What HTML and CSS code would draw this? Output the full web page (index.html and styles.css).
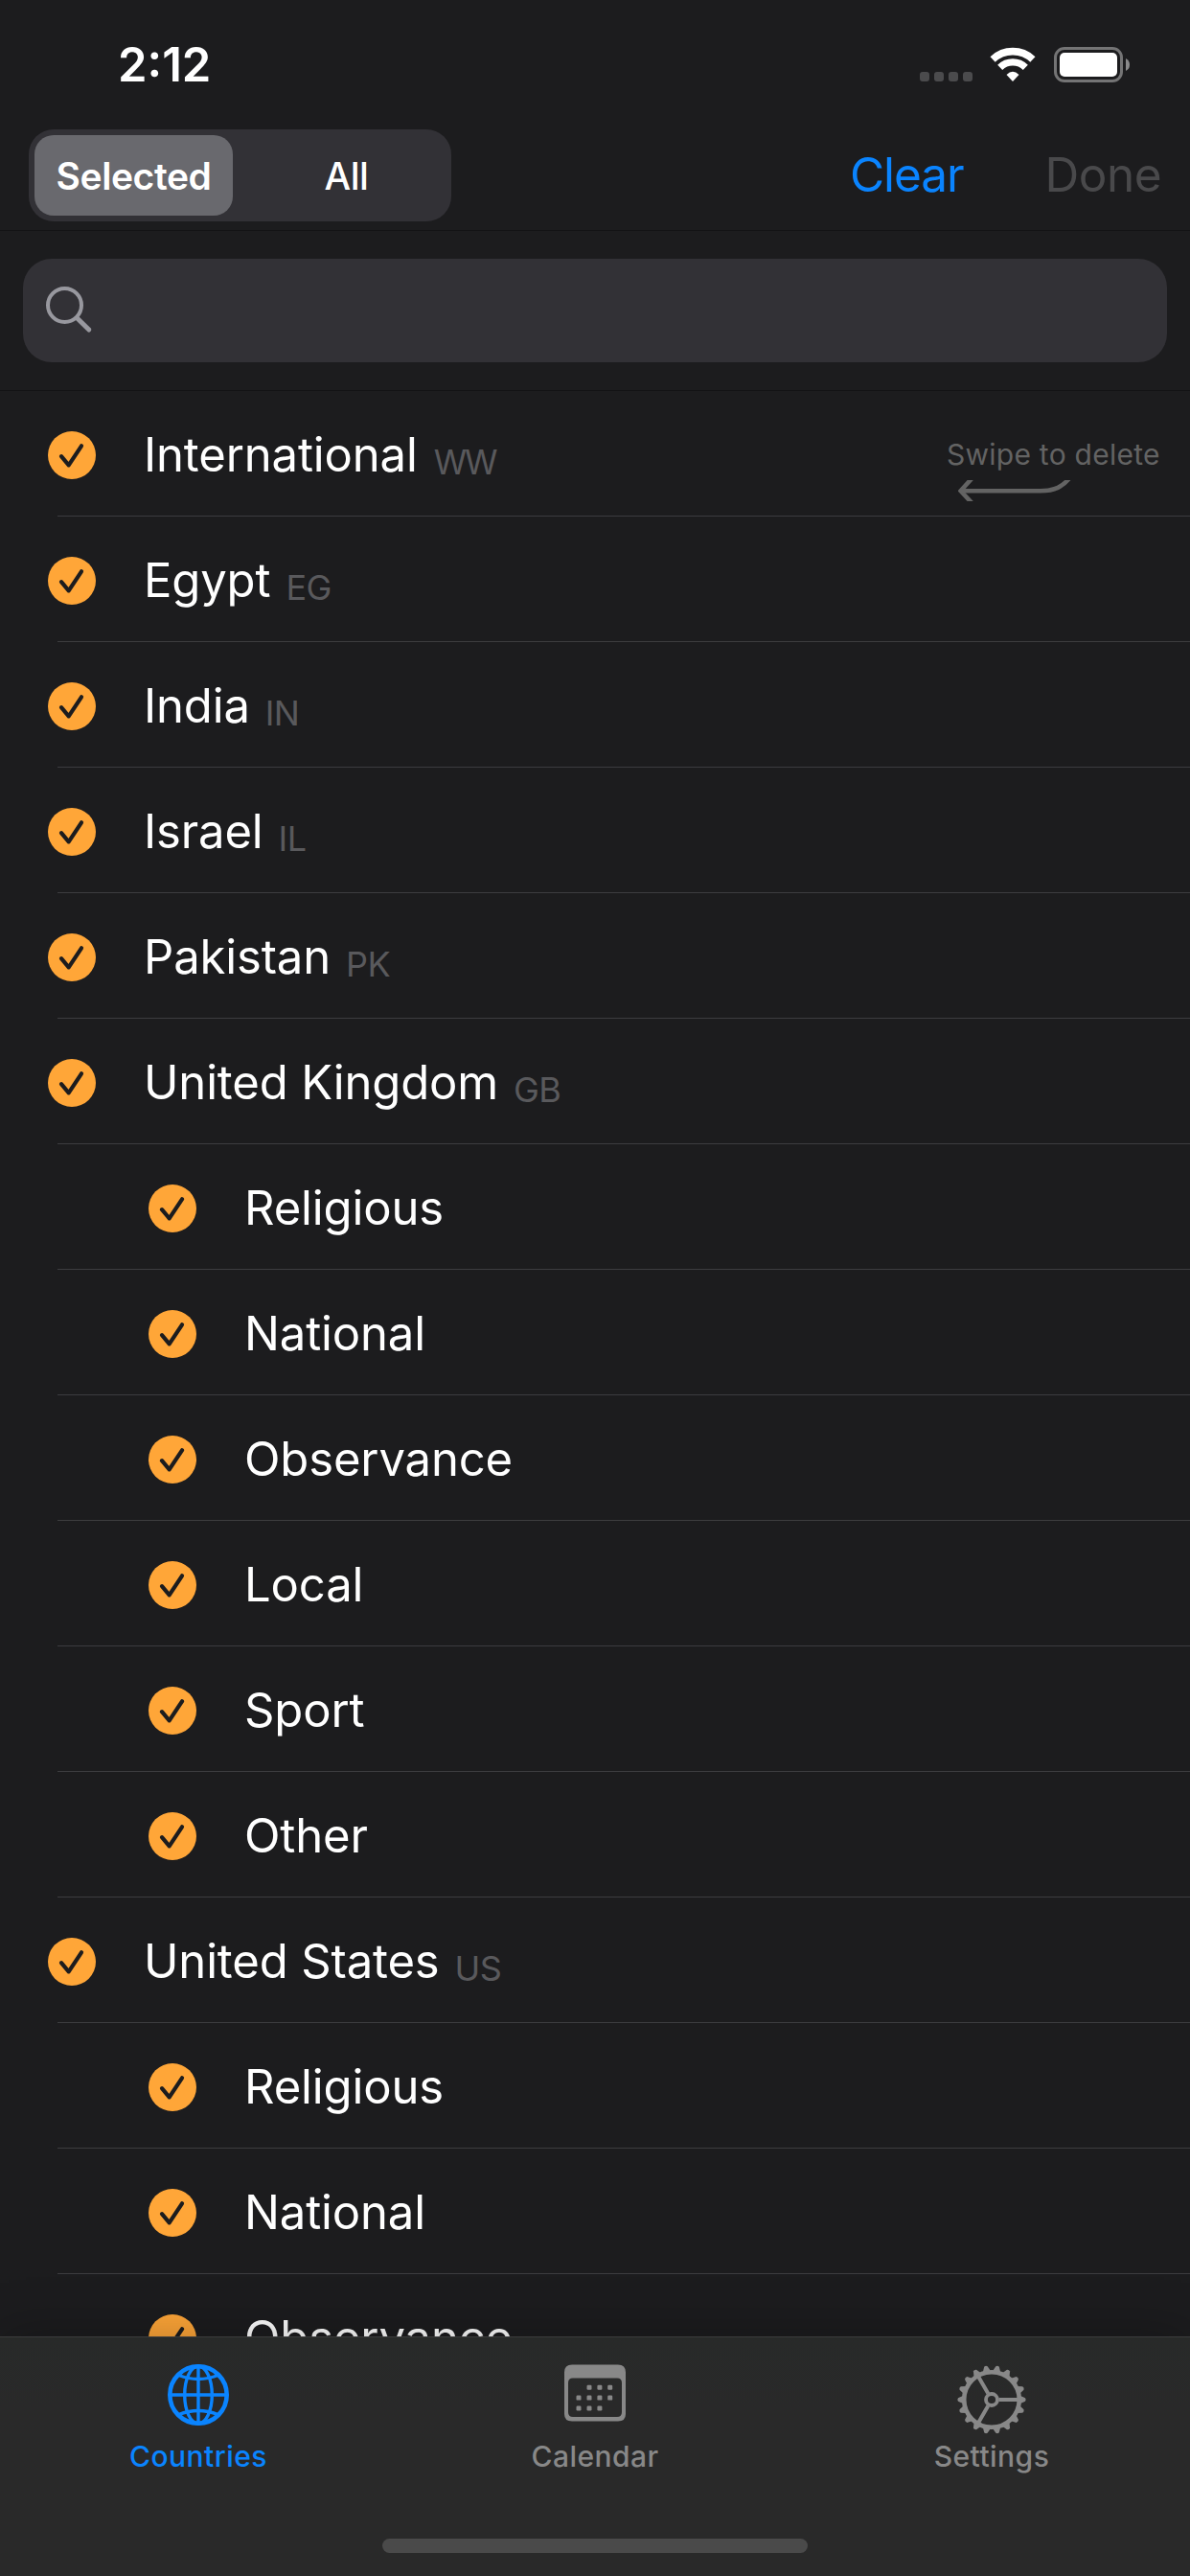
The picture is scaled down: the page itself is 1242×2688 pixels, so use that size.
FILE: index.html
```
<!DOCTYPE html>
<html lang="en">
<head>
<meta charset="utf-8">
<title>Countries</title>
<link rel="stylesheet" href="styles.css">
</head>
<body>
<svg class="defs" width="0" height="0" aria-hidden="true">
  <symbol id="check" viewBox="0 0 50 50">
    <circle cx="25" cy="25" r="25" fill="#ffa638"/>
    <path d="M14 26.2 21.7 35.3 35 15.3" fill="none" stroke="#1c1c1e" stroke-width="4.2" stroke-linecap="round" stroke-linejoin="round"/>
  </symbol>
</svg>
<div class="screen">
  <div class="status">
    <span class="time">2:12</span>
    <span class="signal"><i></i><i></i><i></i><i></i></span>
    <svg class="wifi" width="48" height="37" viewBox="0 0 48 37">
      <path d="M3.1 12.9A30.5 30.5 0 0 1 44.9 12.9" fill="none" stroke="#fff" stroke-width="7.6"/>
      <path d="M10.7 21.4A19 19 0 0 1 37.3 21.4" fill="none" stroke="#fff" stroke-width="7.2"/>
      <path d="M17.5 29Q24 22.6 30.5 29L24 36Z" fill="#fff"/>
    </svg>
    <svg class="battery" width="80" height="37" viewBox="0 0 80 37">
      <rect x="1.5" y="1.5" width="69" height="34" rx="9.5" fill="none" stroke="#747475" stroke-width="3"/>
      <rect x="6" y="6" width="60" height="25" rx="5" fill="#fff"/>
      <path d="M75 12Q79 14 79 18.5T75 25Z" fill="#8a8a8b"/>
    </svg>
  </div>
  <div class="navbar">
    <div class="segments">
      <span class="segment active">Selected</span>
      <span class="segment">All</span>
    </div>
    <span class="action clear">Clear</span>
    <span class="action done">Done</span>
  </div>
  <div class="searchbar">
    <div class="field">
      <svg width="50" height="50" viewBox="0 0 50 50" fill="none" stroke="#98989f" stroke-linecap="round">
        <circle cx="19.5" cy="19.5" r="17.5" stroke-width="4"/>
        <path d="M32.5 33 44.8 45" stroke-width="5"/>
      </svg>
    </div>
  </div>
  <div class="list">
    <div class="row"><svg class="check"><use href="#check"/></svg><span class="name">International<span class="code wide">WW</span></span>
      <div class="hint">
        <span>Swipe to delete</span>
        <svg width="120" height="22" viewBox="0 0 120 22" fill="none" stroke="#636363" stroke-width="4.6">
          <path d="M15-2.5 2.6 11.2 15 24.5"/>
          <path d="M2 11.2H86C101 11.2 109 7 117-3"/>
        </svg>
      </div>
    </div>
    <div class="row"><svg class="check"><use href="#check"/></svg><span class="name">Egypt<span class="code">EG</span></span></div>
    <div class="row"><svg class="check"><use href="#check"/></svg><span class="name">India<span class="code">IN</span></span></div>
    <div class="row"><svg class="check"><use href="#check"/></svg><span class="name">Israel<span class="code">IL</span></span></div>
    <div class="row"><svg class="check"><use href="#check"/></svg><span class="name">Pakistan<span class="code">PK</span></span></div>
    <div class="row"><svg class="check"><use href="#check"/></svg><span class="name">United Kingdom<span class="code">GB</span></span></div>
    <div class="row sub"><svg class="check"><use href="#check"/></svg><span class="name">Religious</span></div>
    <div class="row sub"><svg class="check"><use href="#check"/></svg><span class="name">National</span></div>
    <div class="row sub"><svg class="check"><use href="#check"/></svg><span class="name">Observance</span></div>
    <div class="row sub"><svg class="check"><use href="#check"/></svg><span class="name">Local</span></div>
    <div class="row sub"><svg class="check"><use href="#check"/></svg><span class="name">Sport</span></div>
    <div class="row sub"><svg class="check"><use href="#check"/></svg><span class="name">Other</span></div>
    <div class="row"><svg class="check"><use href="#check"/></svg><span class="name">United States<span class="code">US</span></span></div>
    <div class="row sub"><svg class="check"><use href="#check"/></svg><span class="name">Religious</span></div>
    <div class="row sub"><svg class="check"><use href="#check"/></svg><span class="name">National</span></div>
    <div class="row sub"><svg class="check"><use href="#check"/></svg><span class="name">Observance</span></div>
  </div>
  <div class="tabbar">
    <div class="tabs">
      <div class="tab current">
        <svg width="74" height="74" viewBox="-37 -37 74 74" fill="none" stroke="currentColor">
          <circle r="29.7" stroke-width="4.6"/>
          <ellipse rx="14.3" ry="30" stroke-width="3.4"/>
          <path d="M0-30V30M-30 0H30" stroke-width="3.4"/>
          <path d="M-20.5-20.5Q0-12.5 20.5-20.5M-20.5 20.5Q0 12.5 20.5 20.5" stroke-width="3.4"/>
        </svg>
        <span>Countries</span>
      </div>
      <div class="tab">
        <svg width="74" height="74" viewBox="-37 -37 74 74" fill="currentColor">
          <path fill-rule="evenodd" d="M-24-31.5H24Q32-31.5 32-23.5V20Q32 27.500 24 27.500H-24Q-32 27.500-32 20V-23.500Q-32-31.500-24-31.500ZM-23-17.500Q-28-17.500-28-12.500V18Q-28 23-23 23H23Q28 23 28 18V-12.500Q28-17.500 23-17.500Z"/>
          <rect x="-8.5" y="-10.2" width="5" height="5" rx="1.2"/><rect x="2.400" y="-10.200" width="5" height="5" rx="1.200"/><rect x="13.200" y="-10.200" width="5" height="5" rx="1.200"/>
          <rect x="-19.500" y=".6" width="5" height="5" rx="1.200"/><rect x="-8.500" y=".6" width="5" height="5" rx="1.200"/><rect x="2.400" y=".6" width="5" height="5" rx="1.200"/><rect x="13.200" y=".6" width="5" height="5" rx="1.200"/>
          <rect x="-19.500" y="11.500" width="5" height="5" rx="1.200"/><rect x="-8.500" y="11.500" width="5" height="5" rx="1.200"/><rect x="2.400" y="11.500" width="5" height="5" rx="1.200"/>
        </svg>
        <span>Calendar</span>
      </div>
      <div class="tab">
        <svg width="74" height="74" viewBox="-37 -42 74 74" overflow="visible" fill="none" stroke="currentColor">
          <defs><path id="tooth" d="M30-4 35-1.8Q36.400 0 35 1.800L30 4Z" fill="currentColor" stroke="none"/></defs>
          <circle r="28.800" stroke-width="4.600"/>
          <circle r="6" stroke-width="3.800"/>
          <path d="M7.500 0H27M-3.750-6.500-14-24.200M-3.750 6.500-14 24.200" stroke-width="4"/>
          <use href="#tooth"/><use href="#tooth" transform="rotate(20)"/><use href="#tooth" transform="rotate(40)"/><use href="#tooth" transform="rotate(60)"/><use href="#tooth" transform="rotate(80)"/><use href="#tooth" transform="rotate(100)"/><use href="#tooth" transform="rotate(120)"/><use href="#tooth" transform="rotate(140)"/><use href="#tooth" transform="rotate(160)"/><use href="#tooth" transform="rotate(180)"/><use href="#tooth" transform="rotate(200)"/><use href="#tooth" transform="rotate(220)"/><use href="#tooth" transform="rotate(240)"/><use href="#tooth" transform="rotate(260)"/><use href="#tooth" transform="rotate(280)"/><use href="#tooth" transform="rotate(300)"/><use href="#tooth" transform="rotate(320)"/><use href="#tooth" transform="rotate(340)"/>
        </svg>
        <span>Settings</span>
      </div>
    </div>
    <div class="home"></div>
  </div>
</div>
</body>
</html>
```
FILE: styles.css
```
* { box-sizing: border-box; }
body {
  margin: 0;
  background: #1c1c1e;
  color: #fff;
  font-family: Inter, "Liberation Sans", sans-serif;
}
.defs { display: none; }
svg { display: block; flex: none; }
.screen {
  display: flex;
  flex-direction: column;
  width: 1242px;
  height: 2688px;
  overflow: hidden;
}

/* Status bar */
.status {
  display: flex;
  align-items: flex-start;
  height: 132px;
  padding: 49px 62px 0 123px;
}
.time {
  flex: 1;
  margin-top: -6px;
  font-size: 49px;
  line-height: 49px;
  font-weight: 600;
}
.signal { display: flex; gap: 5px; margin: 26px 18px 0 0; }
.signal i { width: 10px; height: 10px; border-radius: 3px; background: #4b4b4d; }
.wifi { margin-right: 19px; }

/* Navigation bar */
.navbar {
  display: flex;
  align-items: center;
  height: 109px;
  padding: 0 30px 6px;
  border-bottom: 1px solid #131315;
}
.segments {
  display: flex;
  justify-content: space-between;
  width: 441px;
  height: 96px;
  margin-right: auto;
  padding: 6px;
  border-radius: 26px;
  background: #323136;
}
.segment {
  display: flex;
  align-items: center;
  justify-content: center;
  width: 207px;
  font-size: 39px;
  font-weight: 500;
  letter-spacing: -0.4px;
}
.segment.active {
  border-radius: 20px;
  background: #69696e;
  font-weight: 600;
}
.action { margin-top: -2px; font-size: 49.5px; line-height: 60px; }
.clear { margin-right: 85px; color: #0a84ff; letter-spacing: -1.1px; }
.done { color: #49494b; letter-spacing: -0.5px; }

/* Search */
.searchbar {
  height: 167px;
  padding: 29px 24px 0;
  border-bottom: 1px solid #131315;
}
.field {
  height: 108px;
  padding: 29px 24px;
  border-radius: 30px;
  background: #323136;
}

/* Country list */
.list { flex: 1; min-height: 0; overflow: hidden; }
.row {
  display: flex;
  align-items: center;
  height: 131px;
  padding: 3px 28px 0 50px;
  background: linear-gradient(#3c3c3f, #3c3c3f) 60px 100% / 100% 1px no-repeat;
}
.row.sub { padding-left: 155px; }
.check { width: 50px; height: 50px; margin-right: 50px; }
.name {
  margin-top: -1px;
  font-size: 49px;
  line-height: 60px;
  letter-spacing: -0.14px;
  white-space: nowrap;
}
.code {
  margin-left: 16px;
  font-size: 36px;
  line-height: 1;
  letter-spacing: -0.6px;
  vertical-align: -3px;
  color: #59595c;
}
.code.wide { margin-left: 17px; font-size: 35px; letter-spacing: -3px; }
.hint {
  width: 226px;
  margin-left: auto;
  padding-top: 29px;
  font-size: 30px;
  line-height: 36px;
  letter-spacing: 0.25px;
  color: #636363;
  white-space: nowrap;
}
.hint svg { margin: 9px 0 0 12px; overflow: hidden; }

/* Tab bar */
.tabbar {
  position: relative;
  height: 250px;
  border-top: 1px solid #3c3c3d;
  background: linear-gradient(#282a29, #292929 30%);
  box-shadow: 0 0 54px rgba(0, 0, 0, 0.28);
}
.tabs { display: grid; grid-template-columns: repeat(3, 1fr); height: 210px; }
.tab {
  display: flex;
  flex-direction: column;
  align-items: center;
  padding-top: 23px;
  font-size: 30px;
  line-height: 36px;
  font-weight: 500;
  letter-spacing: 0.45px;
  color: #888;
}
.tab span { margin-top: 9px; }
.current { color: #0a84ff; }
.home {
  width: 444px;
  height: 15px;
  margin: 0 auto;
  border-radius: 8px;
  background: #4a4a4a;
}
```
